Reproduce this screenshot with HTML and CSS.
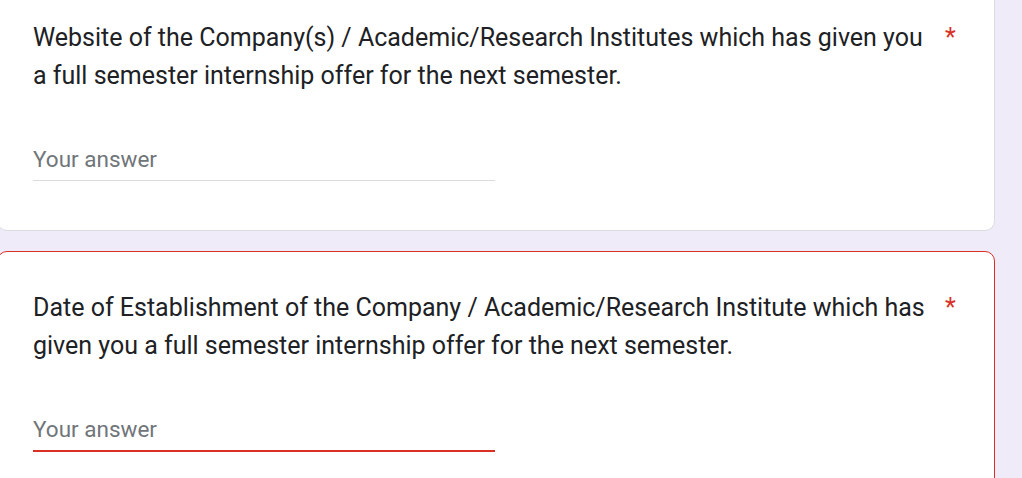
FILE: index.html
```html
<!DOCTYPE html>
<html lang="en">
<head>
<meta charset="utf-8">
<title>Form</title>
<link rel="stylesheet" href="styles.css">
</head>
<body>
<div class="form">
  <div class="card">
    <div class="q-title">
      <span class="q-text">Website of the Company(s) / Academic/Research Institutes which has given you a full semester internship offer for the next semester.</span>
      <span class="req">*</span>
    </div>
    <div class="answer">Your answer</div>
  </div>
  <div class="card card-error">
    <div class="q-title">
      <span class="q-text">Date of Establishment of the Company / Academic/Research Institute which has given you a full semester internship offer for the next semester.</span>
      <span class="req">*</span>
    </div>
    <div class="answer answer-error">Your answer</div>
  </div>
</div>
</body>
</html>
```

FILE: styles.css
```css
html, body {
  margin: 0;
  padding: 0;
  background: #f0ebf8;
  overflow: hidden;
}
body {
  font-family: Roboto, "Liberation Sans", Arial, sans-serif;
  color: #202124;
}
.form {
  margin-top: -18px;
  margin-left: -3px;
  width: 998px;
  display: flex;
  flex-direction: column;
  gap: 20px;
}
.card {
  background: #fff;
  border: 1px solid #dadce0;
  border-radius: 10px;
  padding: 36px 35px 49px 35px;
}
.card-error {
  border-color: #d93025;
  padding-top: 37px;
}
.q-title {
  display: flex;
  align-items: flex-start;
  font-size: 25px;
  line-height: 38px;
}
.q-text {
  flex: 1;
}
.req {
  color: #d93025;
  padding-left: 9px;
  width: 14px;
}
.answer {
  margin-top: 48px;
  width: 462px;
  height: 37px;
  font-size: 22.5px;
  line-height: 32px;
  color: #70757a;
  border-bottom: 1px solid #dadce0;
}
.answer-error {
  border-bottom: 2px solid #d93025;
}
```
